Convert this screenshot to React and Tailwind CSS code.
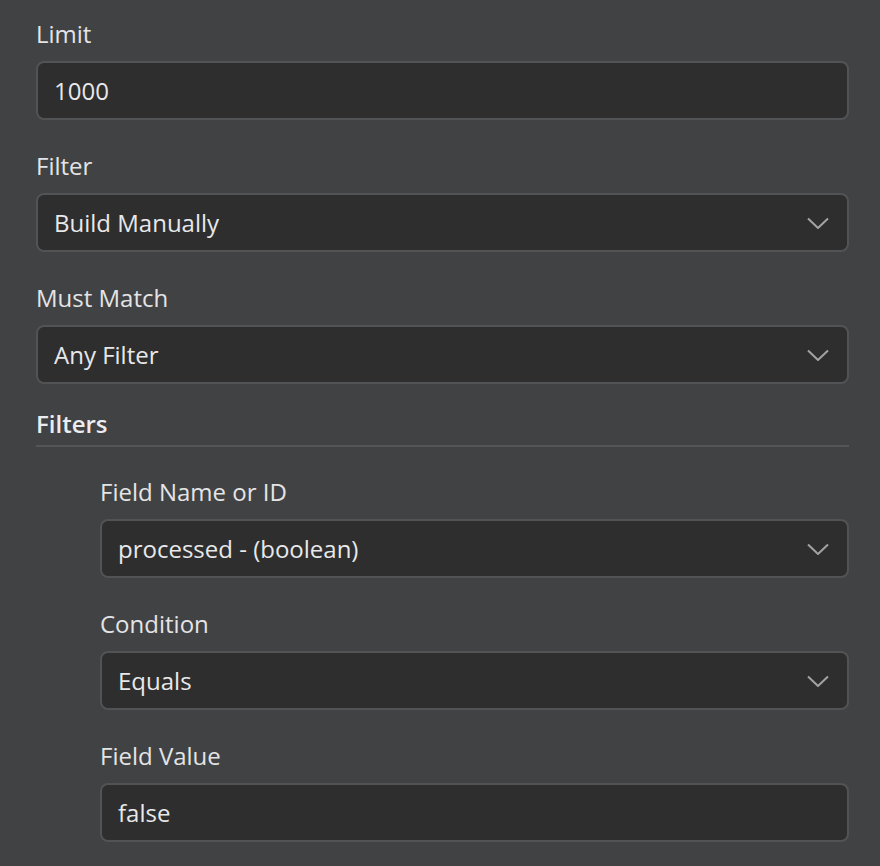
import React from "react";

function Chevron() {
  return (
    <svg width="22" height="12" viewBox="0 0 22 12" fill="none" className="shrink-0">
      <path d="M1 1.5l10 9.5 10-9.5" stroke="#a3a3a5" strokeWidth="2" />
    </svg>
  );
}

function Field({ label, value, select = false }) {
  return (
    <div className="flex flex-col">
      <div className="h-8 text-[24px] leading-8 text-[#e4e4e6]">{label}</div>
      <div className="mt-[11px] flex h-[59px] items-center justify-between rounded-[8px] border-2 border-[#525355] bg-[#2e2e2e] pl-4 pr-[18px]">
        <span className="text-[24px] leading-8 text-[#e8e8ea]">{value}</span>
        {select && <Chevron />}
      </div>
    </div>
  );
}

export default function App() {
  return (
    <div
      className="min-h-[866px] w-[880px] bg-[#414244] pl-9 pr-[31px] pt-[18px]"
      style={{ fontFamily: '"Open Sans", sans-serif' }}
    >
      <div className="flex flex-col gap-[30px]">
        <Field label="Limit" value="1000" />
        <Field label="Filter" value="Build Manually" select />
        <Field label="Must Match" value="Any Filter" select />
      </div>

      <div className="mt-6 border-b-2 border-[#545557] pb-[5px] text-[24px] font-semibold leading-8 text-[#ececee]">
        Filters
      </div>

      <div className="mt-[29px] flex flex-col gap-[30px] pl-16">
        <Field label="Field Name or ID" value="processed - (boolean)" select />
        <Field label="Condition" value="Equals" select />
        <Field label="Field Value" value="false" />
      </div>
    </div>
  );
}
